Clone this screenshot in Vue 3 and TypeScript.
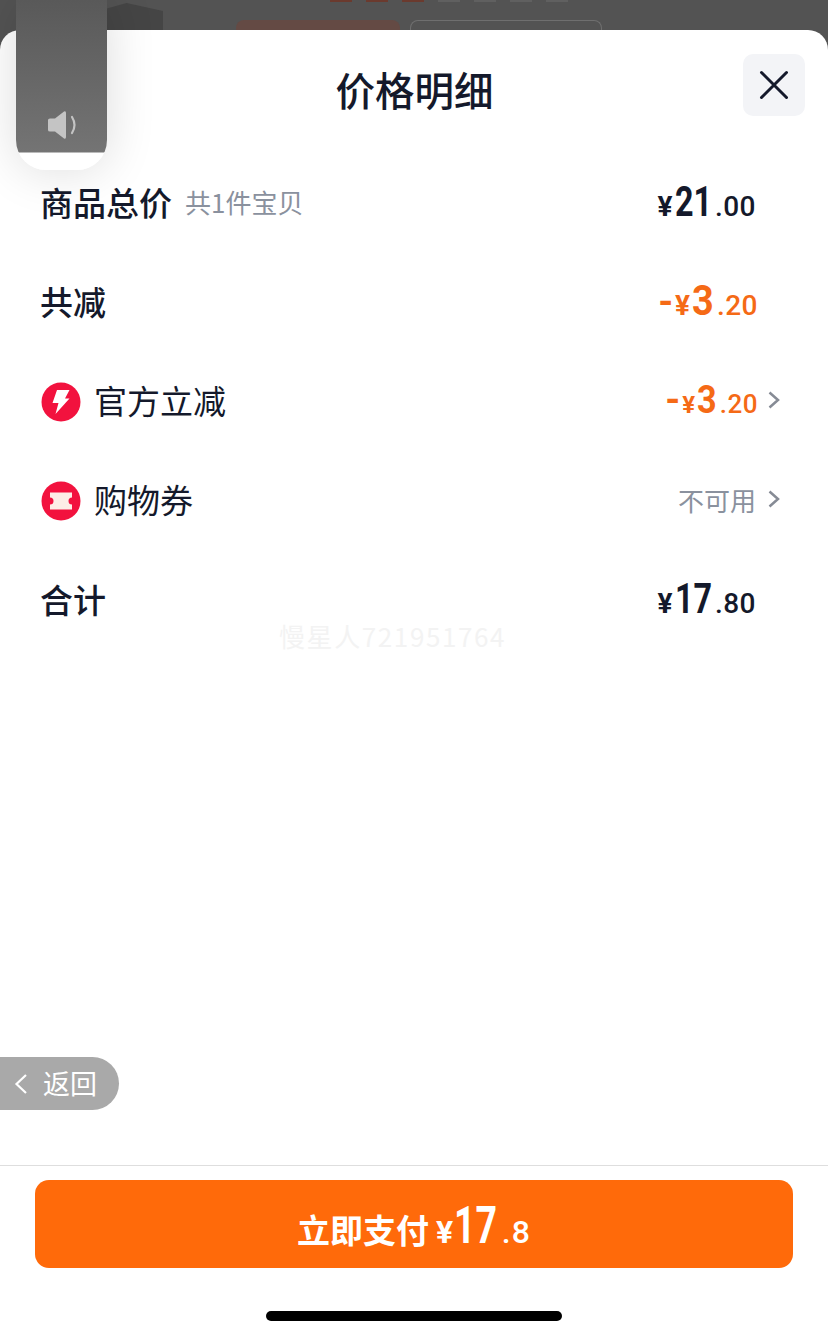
<template>
  <div class="page">
    <div class="backdrop">
      <div class="bd-box"></div>
      <div class="bd-title">
        <i v-for="n in 3" :key="n"></i>
        <i v-for="n in 4" :key="'g' + n" class="grey"></i>
      </div>
      <div class="bd-btn bd-btn-red"></div>
      <div class="bd-btn bd-btn-line"></div>
    </div>

    <div class="sheet">
      <div class="sheet-head">
        <div class="sheet-title">价格明细</div>
        <button class="close-btn" aria-label="关闭">
          <svg width="30" height="30" viewBox="0 0 30 30">
            <path d="M2.500 2.500 L27.500 27.500 M27.500 2.500 L2.500 27.500" stroke="#14192b" stroke-width="3" stroke-linecap="round" fill="none" />
          </svg>
        </button>
      </div>

      <div class="rows">
        <div v-for="row in rows" :key="row.label" class="row">
          <div class="row-left">
            <span v-if="row.icon" class="row-icon">
              <svg v-if="row.icon === 'bolt'" width="40" height="40" viewBox="0 0 40 40">
                <circle cx="20" cy="20" r="19.500" fill="#f2123e" />
                <path d="M16 8 H28.500 L24 16.500 H28.500 L14.500 32 L17.500 21 H11.500 Z" fill="#fff" />
              </svg>
              <svg v-else width="40" height="40" viewBox="0 0 40 40">
                <circle cx="20" cy="20" r="19.500" fill="#f2123e" />
                <path d="M9 11.500 H31 V16.500 A3.500 3.500 0 0 0 31 23.500 V28.500 H9 V23.500 A3.500 3.500 0 0 0 9 16.500 Z" fill="#fdeee6" />
              </svg>
            </span>
            <span :class="row.bold ? 'label-bold' : 'label-plain'">{{ row.label }}</span>
            <span v-if="row.note" class="label-note">{{ row.note }}</span>
          </div>
          <div class="row-right">
            <span v-if="row.text" class="muted">{{ row.text }}</span>
            <span v-else class="price" :class="[row.tone, row.size]">
              <span v-if="row.minus" class="minus">-</span><span class="yen">¥</span><span class="int">{{ row.int }}</span><span class="dec">.{{ row.dec }}</span>
            </span>
            <svg v-if="row.arrow" class="arrow" width="14" height="20" viewBox="0 0 14 20">
              <path d="M2.500 2.500 L11 10 L2.500 17.500" stroke="#868b95" stroke-width="2.500" fill="none" />
            </svg>
          </div>
        </div>
      </div>

      <div class="watermark">慢星人721951764</div>

      <div class="sheet-foot">
        <button class="pay-btn">
          <span class="pay-label">立即支付</span>
          <span class="pay-yen">¥</span><span class="pay-int">17</span><span class="pay-dec">.8</span>
        </button>
        <div class="home-bar"></div>
      </div>
    </div>

    <div class="volume">
      <svg width="34" height="30" viewBox="0 0 34 30">
        <path d="M2 10 Q2 8.500 4 8.500 H9 L18 1.500 Q20 0.500 20 3 V27 Q20 29.500 18 28.500 L9 21.500 H4 Q2 21.500 2 20 Z" fill="#c4c4c4" />
        <path d="M26 7 Q31 15 26 23" stroke="#c4c4c4" stroke-width="2.200" fill="none" stroke-linecap="round" />
      </svg>
    </div>

    <div class="back-pill">
      <svg width="14" height="22" viewBox="0 0 14 22">
        <path d="M12 2 L2.500 11 L12 20" stroke="#fff" stroke-width="2.200" fill="none" />
      </svg>
      <span>返回</span>
    </div>
  </div>
</template>

<script setup lang="ts">
interface PriceRow {
  label: string;
  bold?: boolean;
  note?: string;
  icon?: 'bolt' | 'ticket';
  tone?: 'dark' | 'orange';
  size?: 'big' | 'mid';
  minus?: boolean;
  int?: string;
  dec?: string;
  text?: string;
  arrow?: boolean;
}

const rows: PriceRow[] = [
  { label: '商品总价', bold: true, note: '共1件宝贝', tone: 'dark', size: 'big', int: '21', dec: '00' },
  { label: '共减', bold: true, tone: 'orange', size: 'big', minus: true, int: '3', dec: '20' },
  { label: '官方立减', icon: 'bolt', tone: 'orange', size: 'mid', minus: true, int: '3', dec: '20', arrow: true },
  { label: '购物券', icon: 'ticket', text: '不可用', arrow: true },
  { label: '合计', bold: true, tone: 'dark', size: 'big', int: '17', dec: '80' },
];
</script>

<style>
html,
body {
  margin: 0;
  background: #555;
}
</style>

<style scoped>
.page {
  position: relative;
  width: 828px;
  height: 1336px;
  overflow: hidden;
  display: flex;
  flex-direction: column;
  background: #535353;
  font-family: "Noto Sans CJK SC", "Noto Sans", sans-serif;
  color: #14192b;
}
.backdrop {
  height: 30px;
  flex: none;
  display: flex;
  align-items: flex-end;
  gap: 10px;
  padding-left: 236px;
  position: relative;
}
.bd-box {
  position: absolute;
  left: 107px;
  top: 3px;
  width: 56px;
  height: 27px;
  background: #454545;
  clip-path: polygon(0 20%, 35% 0, 100% 30%, 100% 100%, 0 100%);
}
.bd-title {
  position: absolute;
  left: 330px;
  top: 0;
  display: flex;
  gap: 14px;
}
.bd-title i {
  width: 22px;
  height: 2px;
  background: #6b3a2e;
}
.bd-title i.grey {
  background: #606060;
}
.bd-btn {
  height: 10px;
  border-radius: 8px 8px 0 0;
}
.bd-btn-red {
  width: 164px;
  background: #644a44;
}
.bd-btn-line {
  width: 192px;
  box-sizing: border-box;
  border: 1px solid #6f6f6f;
  border-bottom: 0;
}
.sheet {
  flex: 1;
  position: relative;
  display: flex;
  flex-direction: column;
  background: #fff;
  border-radius: 20px 20px 0 0;
}
.sheet-head {
  height: 122px;
  display: flex;
  align-items: center;
  justify-content: center;
  position: relative;
}
.sheet-title {
  font-size: 39.500px;
  font-weight: 500;
  line-height: 1;
  margin: 0 0 4px 1px;
}
.close-btn {
  position: absolute;
  top: 24px;
  right: 23px;
  width: 62px;
  height: 62px;
  padding: 0;
  border: 0;
  border-radius: 10px;
  background: #f3f4f7;
  display: flex;
  align-items: center;
  justify-content: center;
}
.rows {
  display: flex;
  flex-direction: column;
  padding: 0 48px 0 40px;
}
.row {
  height: 99.250px;
  display: flex;
  align-items: center;
  justify-content: space-between;
}
.row-left {
  display: flex;
  align-items: center;
}
.row-icon {
  display: flex;
  margin: 3px 13px 0 1px;
}
.label-bold {
  font-size: 33px;
  font-weight: 500;
}
.label-plain {
  font-size: 33px;
  font-weight: 400;
}
.label-note {
  margin-left: 13px;
  font-size: 26px;
  color: #8a919e;
}
.row-right {
  display: flex;
  align-items: center;
  position: relative;
  padding-right: 24px;
}
.arrow {
  position: absolute;
  right: -1px;
  top: 50%;
  margin-top: -10px;
}
.muted {
  font-size: 26px;
  color: #8a919e;
}
.price {
  font-family: "Roboto", "Liberation Sans", sans-serif;
  font-weight: 500;
  display: flex;
  align-items: baseline;
  line-height: 1;
}
.price.dark {
  color: #14192b;
}
.price.orange {
  color: #f56a16;
  margin-right: -2px;
}
.yen {
  font-size: 28px;
  font-weight: 700;
}
.minus {
  font-size: 38px;
  font-weight: 700;
  margin-right: 2px;
}
/* no condensed digit font installed, so the integer part is squeezed */
.int {
  margin: 0 -0.26em 0 2px;
  font-size: 42px;
  font-weight: 700;
  transform: scaleX(0.77);
  transform-origin: left;
}
.dec {
  font-size: 28px;
  margin-left: 3px;
  letter-spacing: 0.5px;
}
.orange .int {
  margin-right: -0.056em;
  transform: scaleX(0.9);
}
.mid .yen {
  font-size: 24px;
}
.mid .int {
  font-size: 38px;
}
.mid .dec {
  font-size: 26px;
}
.watermark {
  position: absolute;
  left: 279px;
  top: 589px;
  font-size: 26px;
  line-height: 34px;
  letter-spacing: 1.6px;
  color: #f3f3f3;
  pointer-events: none;
}
.sheet-foot {
  margin-top: auto;
  height: 171px;
  box-sizing: border-box;
  border-top: 1px solid #dedede;
  padding: 14px 35px 0;
  position: relative;
}
.pay-btn {
  width: 100%;
  height: 88px;
  border: 0;
  border-radius: 14px;
  background: #ff6a0a;
  color: #fff;
  display: flex;
  align-items: baseline;
  justify-content: center;
  padding: 15px 0 0;
  font-family: "Roboto", "Liberation Sans", sans-serif;
  font-weight: 500;
}
.pay-label {
  font-family: "Noto Sans CJK SC", sans-serif;
  font-size: 33px;
  font-weight: 700;
  margin-right: 7px;
}
.pay-yen {
  font-size: 32px;
  font-weight: 700;
}
.pay-int {
  font-size: 52px;
  font-weight: 700;
  margin: 0 -0.31em 0 1px;
  transform: scaleX(0.72);
  transform-origin: left;
}
.pay-dec {
  font-size: 32px;
  margin-left: 4px;
  letter-spacing: 1px;
}
.home-bar {
  position: absolute;
  left: 266px;
  top: 145px;
  width: 296px;
  height: 10px;
  border-radius: 5px;
  background: #000;
}
.volume {
  position: absolute;
  left: 16px;
  top: 0;
  width: 91px;
  height: 170px;
  box-sizing: border-box;
  border-radius: 0 0 30px 30px;
  background: linear-gradient(#595959, #747474 152px, #fff 153px);
  box-shadow: 0 0 50px rgba(0, 0, 0, 0.14);
  display: flex;
  justify-content: center;
  padding-top: 110px;
}
.volume svg {
  margin-left: 2px;
}
.back-pill {
  position: absolute;
  left: 0;
  top: 1057px;
  width: 119px;
  height: 53px;
  box-sizing: border-box;
  border-radius: 0 27px 27px 0;
  background: #a9a9a9;
  color: #fff;
  display: flex;
  align-items: center;
  padding-left: 14px;
  gap: 15px;
  font-size: 27px;
}
.back-pill span {
  margin-top: -2px;
}
</style>
